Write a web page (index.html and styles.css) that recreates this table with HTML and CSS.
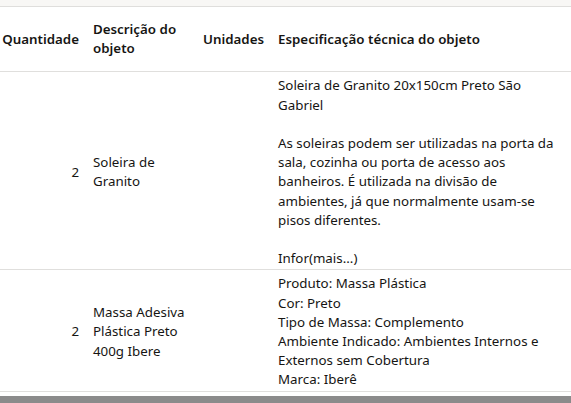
FILE: index.html
```html
<!DOCTYPE html>
<html lang="pt-BR">
<head>
<meta charset="utf-8">
<title>Itens</title>
<link rel="stylesheet" href="styles.css">
</head>
<body>
<div class="topband"></div>
<table class="items">
  <colgroup>
    <col class="c-qty">
    <col class="c-desc">
    <col class="c-unit">
    <col class="c-spec">
  </colgroup>
  <thead>
    <tr>
      <th class="qty">Quantidade</th>
      <th>Descrição do objeto</th>
      <th>Unidades</th>
      <th class="spec">Especificação técnica do objeto</th>
    </tr>
  </thead>
  <tbody>
    <tr>
      <td class="qty">2</td>
      <td>Soleira de Granito</td>
      <td></td>
      <td class="spec">Soleira de Granito 20x150cm Preto São Gabriel<br><br>As soleiras podem ser utilizadas na porta da sala, cozinha ou porta de acesso aos banheiros. É utilizada na divisão de ambientes, já que normalmente usam-se pisos diferentes.<br><br>Infor(mais...)</td>
    </tr>
    <tr>
      <td class="qty">2</td>
      <td>Massa Adesiva Plástica Preto 400g Ibere</td>
      <td></td>
      <td class="spec">Produto: Massa Plástica<br>Cor: Preto<br>Tipo de Massa: Complemento<br>Ambiente Indicado: Ambientes Internos e Externos sem Cobertura<br>Marca: Iberê</td>
    </tr>
  </tbody>
</table>
<div class="bottombar"></div>
</body>
</html>
```
FILE: styles.css
```css
html, body {
  margin: 0;
  padding: 0;
  background: #ffffff;
}
body {
  font-family: "Noto Sans", "Open Sans", sans-serif;
  font-size: 13.33px;
  color: #161513;
  width: 571px;
  height: 403px;
  overflow: hidden;
}
.topband {
  height: 6px;
  background: #f8f7f5;
  border-bottom: 1px solid #dfdedc;
}
.items {
  border-collapse: collapse;
  table-layout: fixed;
  width: 571px;
}
.c-qty { width: 86px; }
.c-desc { width: 110px; }
.c-unit { width: 75px; }
.c-spec { width: 300px; }
.items th,
.items td {
  padding: 4px 7px 1px 7px;
  line-height: 19.2px;
  vertical-align: middle;
  text-align: left;
  border-bottom: 1px solid #e0dfdd;
}
.items th {
  font-weight: 600;
  padding-top: 13px;
  padding-bottom: 13px;
}
.items .qty {
  text-align: right;
  padding-left: 2px;
}
.items .spec {
  padding-right: 13px;
}
.bottombar {
  margin-top: 4px;
  height: 8px;
  background: #8b8b8b;
}
```
